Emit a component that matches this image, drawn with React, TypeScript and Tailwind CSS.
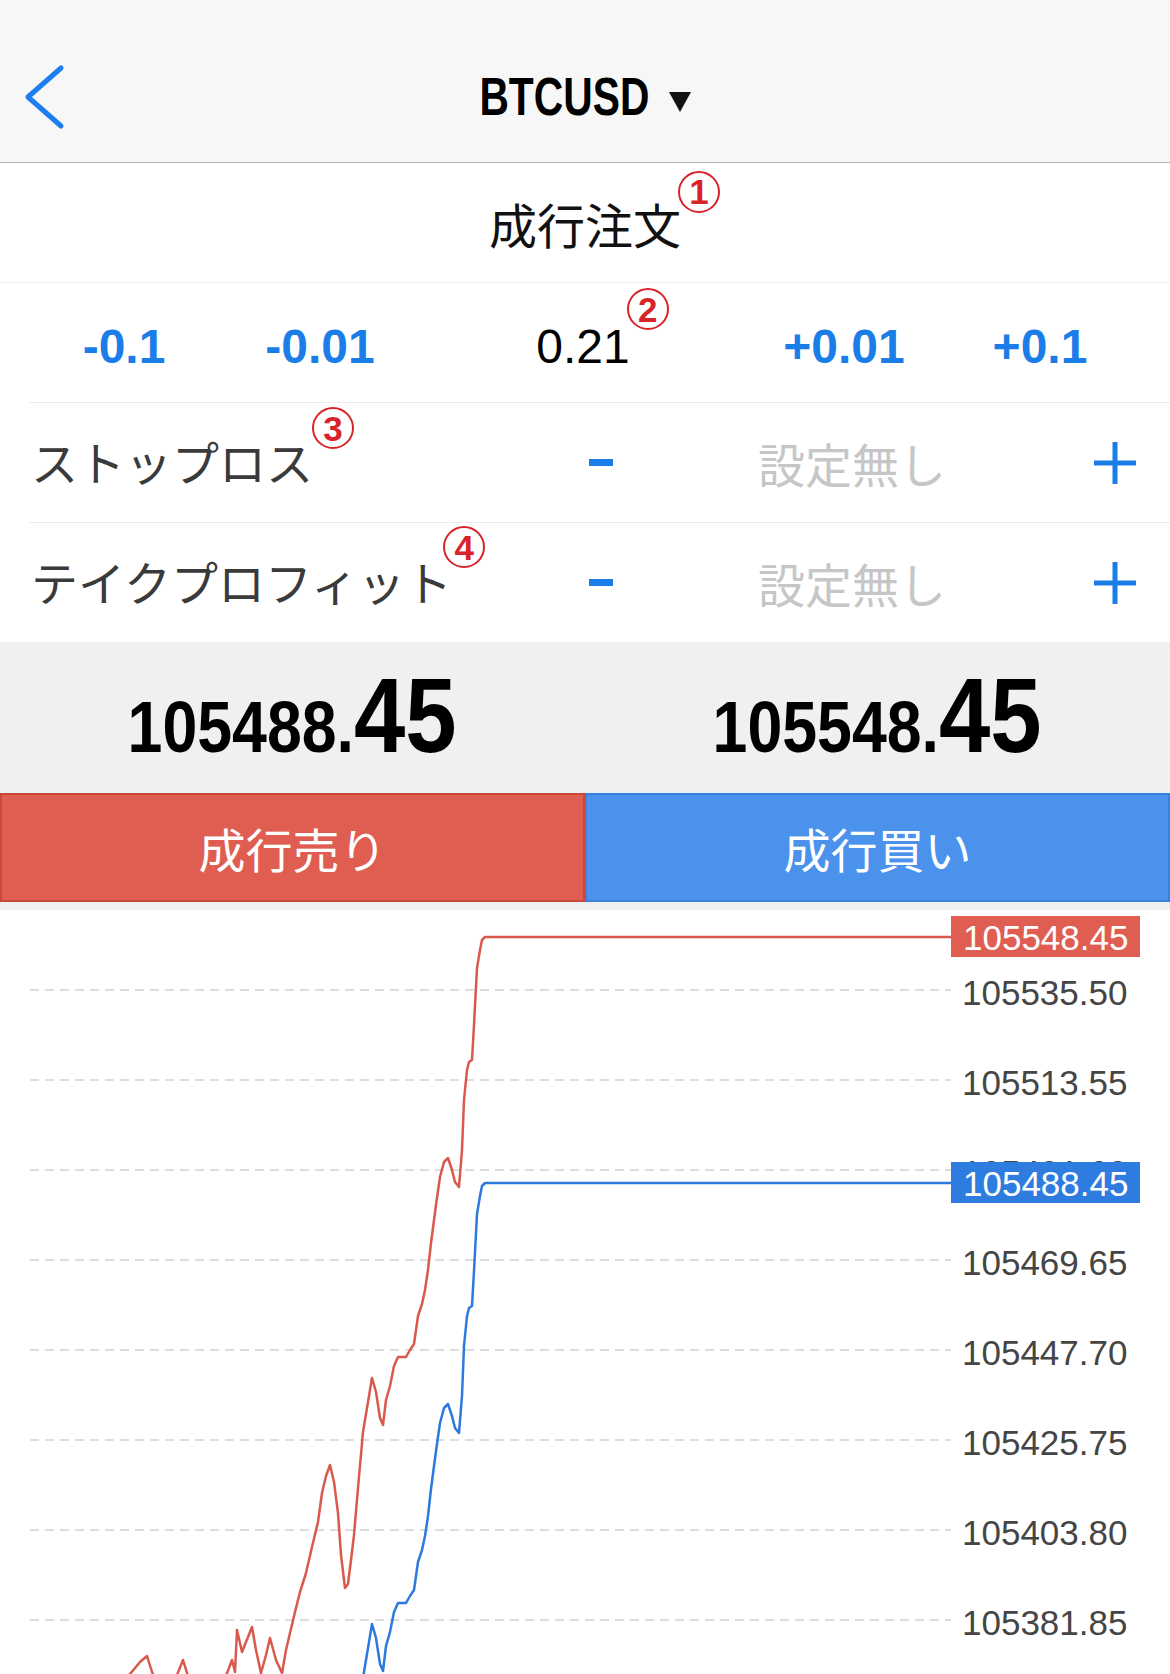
const SANS = "font-['Liberation_Sans','Noto_Sans_CJK_JP',sans-serif]";
const JP = "font-['Noto_Sans_CJK_JP','Noto_Sans_CJK_SC',sans-serif]";

// ask price path in page coordinates, oldest (bottom-left) to newest (top-right)
const ASK: [number, number][] = [
  [110, 1700], [130, 1674], [140, 1662], [147, 1656], [152, 1672], [160, 1690], [175, 1680],
  [183, 1660], [188, 1676], [200, 1690], [215, 1684], [226, 1676], [232, 1660], [235, 1672],
  [237, 1630], [242, 1652], [248, 1637], [252, 1627], [256, 1650], [261, 1673], [266, 1655],
  [270, 1638], [276, 1660], [282, 1673], [286, 1650], [290, 1633], [295, 1612], [300, 1592],
  [306, 1573], [312, 1547], [318, 1522], [322, 1493], [326, 1476], [330, 1465], [334, 1482],
  [338, 1513], [341, 1555], [345, 1588], [348, 1584], [351, 1560], [354, 1535], [358, 1488],
  [363, 1432], [367, 1408], [372, 1378], [376, 1392], [380, 1418], [383, 1425], [386, 1400],
  [390, 1386], [394, 1366], [398, 1357], [406, 1357], [410, 1350], [414, 1344], [418, 1316],
  [422, 1304], [425, 1290], [428, 1270], [431, 1243], [436, 1205], [440, 1177], [444, 1162],
  [448, 1158], [452, 1170], [455, 1182], [459, 1187], [462, 1150], [464, 1100], [467, 1070],
  [469, 1062], [472, 1060], [474, 1025], [477, 968], [480, 950], [482, 940], [485, 937],
  [951, 937],
];

const GRID: [number, string][] = [
  [990, "105535.50"],
  [1080, "105513.55"],
  [1170, "105491.60"],
  [1260, "105469.65"],
  [1350, "105447.70"],
  [1440, "105425.75"],
  [1530, "105403.80"],
  [1620, "105381.85"],
];

const toPoints = (pts: [number, number][], dy: number) =>
  pts.map(([x, y]) => `${x},${y + dy}`).join(" ");

function Badge({ n, className }: { n: string; className: string }) {
  return (
    <span
      className={`absolute flex h-[42px] w-[42px] items-center justify-center rounded-full border-2 border-[#d8232a] ${SANS} text-[35px] font-bold leading-none text-[#d8232a] ${className}`}
    >
      {n}
    </span>
  );
}

function Plus() {
  return (
    <svg width="44" height="44" viewBox="0 0 44 44" className="block">
      <path d="M22 1v42M1 22h42" stroke="#1b7de8" strokeWidth="5" />
    </svg>
  );
}

function Dash() {
  return <div className="h-[7px] w-[24px] bg-[#1b7de8]" />;
}

function LevelRow({ label, badge }: { label: React.ReactNode; badge: React.ReactNode }) {
  return (
    <div className="flex h-[119px] items-center pl-[31px]">
      <div className="w-[558px]">
        <span className={`relative ${JP} text-[47px] leading-none text-[#3a3a3a]`}>
          {label}
          {badge}
        </span>
      </div>
      <Dash />
      <span className={`ml-[145px] w-[188px] ${JP} text-[47px] leading-none text-[#c6c6c6]`}>設定無し</span>
      <div className="ml-[147px]">
        <Plus />
      </div>
    </div>
  );
}

function Price({ head, tail }: { head: string; tail: string }) {
  return (
    <div className="flex h-full items-end justify-center pb-[25px]">
      <span className={`inline-block scale-x-[0.87] ${SANS} text-[72px] font-bold leading-none text-black`}>
        {head}
        <span className="text-[106px] leading-none">{tail}</span>
      </span>
    </div>
  );
}

export default function App() {
  return (
    <div className={`h-[1674px] w-[1170px] overflow-hidden bg-white ${SANS}`}>
      {/* nav bar */}
      <header className="grid h-[163px] grid-cols-[1fr_auto_1fr] items-center border-b border-[#b3b3b3] bg-[#f7f7f7] pt-[31px]">
        <div className="pl-[24px]">
          <svg width="42" height="66" viewBox="0 0 42 66" className="block">
            <path d="M37 4L4 33l33 29" fill="none" stroke="#1c7ef0" strokeWidth="5" strokeLinecap="round" strokeLinejoin="round" />
          </svg>
        </div>
        <div className="flex items-center">
          <span className="-mx-[25px] inline-block scale-x-[0.77] text-[53px] font-bold leading-none text-black">BTCUSD</span>
          <svg width="22" height="20" viewBox="0 0 22 20" className="ml-[20px] mt-[10px] block">
            <path d="M0 0h22L11 20z" fill="#111" />
          </svg>
        </div>
        <div />
      </header>

      {/* order type */}
      <div className="flex h-[120px] items-center justify-center border-b border-[#efefef]">
        <span className={`relative ${JP} text-[48px] leading-none text-[#111]`}>
          成行注文
          <Badge n="1" className="left-full top-[-28px] -ml-[3px]" />
        </span>
      </div>

      {/* volume stepper */}
      <div className="grid h-[119px] grid-cols-[192px_200px_326px_196px_196px] items-center pl-[28px] pt-[9px] text-[48px] leading-none">
        <div className="flex justify-center font-bold text-[#1b7de8]">-0.1</div>
        <div className="flex justify-center font-bold text-[#1b7de8]">-0.01</div>
        <div className="flex justify-center text-black">
          <span className="relative">
            0.21
            <Badge n="2" className="left-full top-[-35px] -ml-[3px]" />
          </span>
        </div>
        <div className="flex justify-center font-bold text-[#1b7de8]">+0.01</div>
        <div className="flex justify-center font-bold text-[#1b7de8]">+0.1</div>
      </div>
      <div className="ml-[29px] h-px bg-[#ececec]" />

      <LevelRow label="ストップロス" badge={<Badge n="3" className="left-full top-[-19px] -ml-[1px]" />} />
      <div className="ml-[29px] h-px bg-[#ececec]" />
      <LevelRow label="テイクプロフィット" badge={<Badge n="4" className="left-full top-[-20px] -ml-[9px]" />} />

      {/* bid / ask */}
      <div className="grid h-[151px] grid-cols-2 bg-[#f0f0f0]">
        <Price head="105488." tail="45" />
        <Price head="105548." tail="45" />
      </div>

      {/* trade buttons */}
      <div className={`grid h-[109px] grid-cols-2 ${JP} text-[47px] leading-none text-white`}>
        <button className="flex items-center justify-center border-2 border-[#c9463b] bg-[#df5e51]">成行売り</button>
        <button className="flex items-center justify-center border-2 border-[#3b80dd] bg-[#4a92ec]">成行買い</button>
      </div>
      <div className="h-[8px] bg-[#eef0f2]" />

      {/* tick chart */}
      <div className="h-[764px]">
        <svg width="1170" height="764" viewBox="0 910 1170 764" className="block">
          {GRID.map(([y]) => (
            <line key={y} x1="30" x2="951" y1={y} y2={y} stroke="#d2d2d2" strokeWidth="1.5" strokeDasharray="9 6" />
          ))}
          {GRID.map(([y, label]) => (
            <text key={label} x="962" y={y + 15} fontSize="35" fill="#454545" fontFamily="Liberation Sans, sans-serif">
              {label}
            </text>
          ))}
          <polyline points={toPoints(ASK, 0)} fill="none" stroke="#d95a4d" strokeWidth="2.5" strokeLinejoin="round" />
          <polyline points={toPoints(ASK, 246)} fill="none" stroke="#2d79dd" strokeWidth="2.5" strokeLinejoin="round" />
          <rect x="951" y="916" width="189" height="41" fill="#df5e51" />
          <text x="963" y="950" fontSize="35" fill="#fff" fontFamily="Liberation Sans, sans-serif">105548.45</text>
          <rect x="951" y="1162" width="189" height="41" fill="#2f7ce0" />
          <text x="963" y="1196" fontSize="35" fill="#fff" fontFamily="Liberation Sans, sans-serif">105488.45</text>
        </svg>
      </div>
    </div>
  );
}
